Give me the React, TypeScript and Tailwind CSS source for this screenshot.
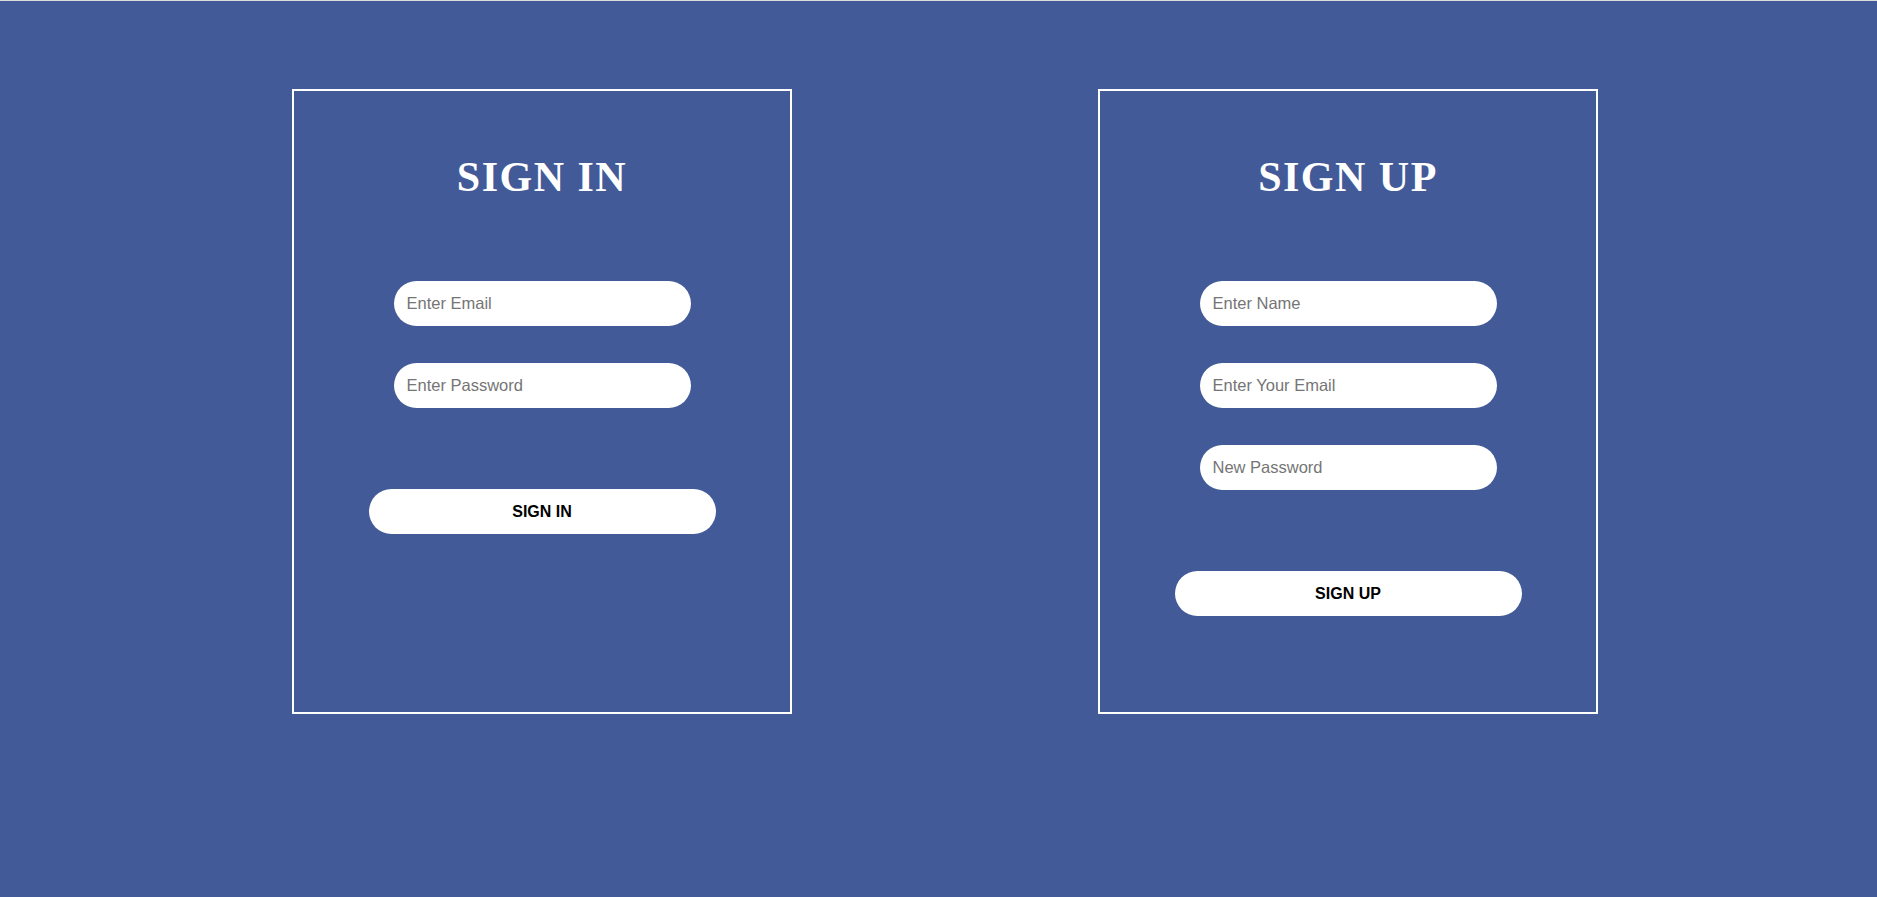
const SignIn = () => {
  return (
    <div className="w-[500px] h-[625px] border-2 border-white flex flex-col items-center pt-[65px]">
      <h2 className="text-[42px] leading-none font-bold text-white tracking-[1.5px] font-['Liberation_Serif',serif]">
        SIGN IN
      </h2>
      <div className="mt-[83px] flex flex-col gap-[37px]">
        <input
          type="email"
          placeholder="Enter Email"
          className="w-[297px] h-[45px] rounded-full bg-white px-[13px] pb-px text-[16.5px] text-black placeholder:text-[#757575] outline-none"
        />
        <input
          type="password"
          placeholder="Enter Password"
          className="w-[297px] h-[45px] rounded-full bg-white px-[13px] pb-px text-[16.5px] text-black placeholder:text-[#757575] outline-none"
        />
      </div>
      <button className="mt-[81px] w-[347px] h-[45px] rounded-full bg-white text-black font-bold text-[16px]">
        SIGN IN
      </button>
    </div>
  );
};

const SignUp = () => {
  return (
    <div className="w-[500px] h-[625px] border-2 border-white flex flex-col items-center pt-[65px]">
      <h2 className="text-[42px] leading-none font-bold text-white tracking-[1.5px] font-['Liberation_Serif',serif]">
        SIGN UP
      </h2>
      <div className="mt-[83px] flex flex-col gap-[37px]">
        <input
          type="text"
          placeholder="Enter Name"
          className="w-[297px] h-[45px] rounded-full bg-white px-[13px] pb-px text-[16.5px] text-black placeholder:text-[#757575] outline-none"
        />
        <input
          type="email"
          placeholder="Enter Your Email"
          className="w-[297px] h-[45px] rounded-full bg-white px-[13px] pb-px text-[16.5px] text-black placeholder:text-[#757575] outline-none"
        />
        <input
          type="password"
          placeholder="New Password"
          className="w-[297px] h-[45px] rounded-full bg-white px-[13px] pb-px text-[16.5px] text-black placeholder:text-[#757575] outline-none"
        />
      </div>
      <button className="mt-[81px] w-[347px] h-[45px] rounded-full bg-white text-black font-bold text-[16px]">
        SIGN UP
      </button>
    </div>
  );
};

export default function App() {
  return (
    <div className="h-screen overflow-hidden bg-[#425a97] border-t border-[#dcdcdc] font-['Liberation_Sans',Arial,sans-serif]">
      <div className="flex pt-[88px] pl-[292px] gap-[306px]">
        <SignIn />
        <SignUp />
      </div>
    </div>
  );
}
